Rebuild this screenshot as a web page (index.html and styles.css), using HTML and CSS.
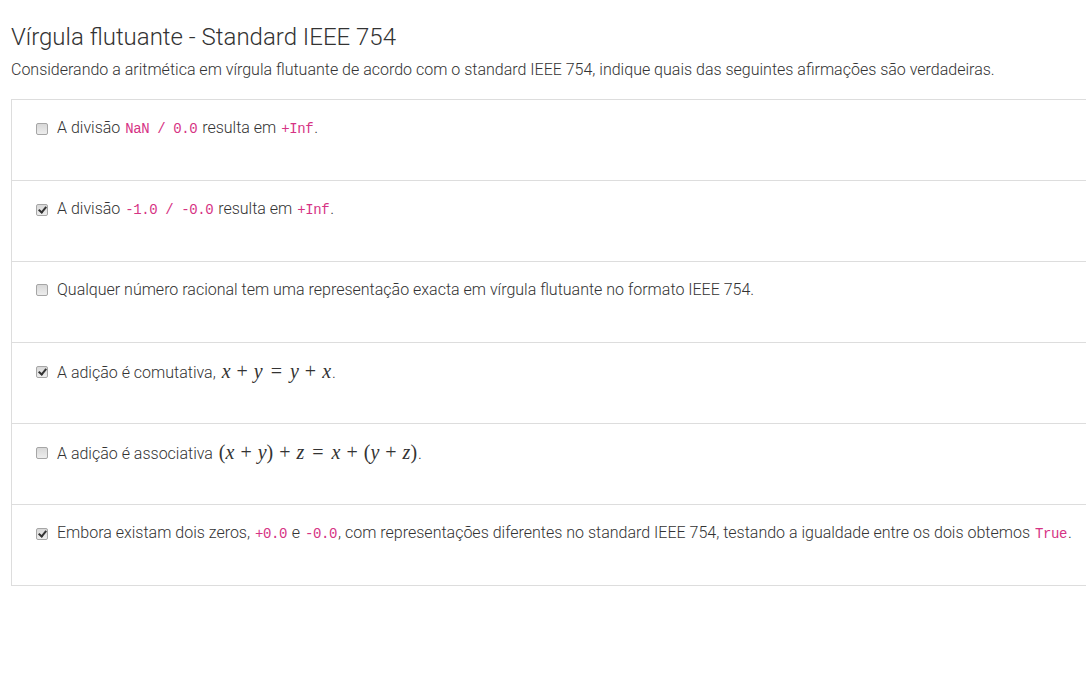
FILE: index.html
```html
<!DOCTYPE html>
<html lang="pt">
<head>
<meta charset="utf-8">
<link rel="stylesheet" href="styles.css">
</head>
<body>
<div class="page">
  <h1 class="title">Vírgula flutuante - Standard IEEE 754</h1>
  <p class="lead">Considerando a aritmética em vírgula flutuante de acordo com o standard IEEE 754, indique quais das seguintes afirmações são verdadeiras.</p>
  <ul class="list">
    <li class="item"><label class="opt"><input type="checkbox" class="cb"><span>A divisão <code>NaN / 0.0</code> resulta em <code>+Inf</code>.</span></label></li>
    <li class="item"><label class="opt"><input type="checkbox" class="cb" checked><span>A divisão <code>-1.0 / -0.0</code> resulta em <code>+Inf</code>.</span></label></li>
    <li class="item"><label class="opt"><input type="checkbox" class="cb"><span>Qualquer número racional tem uma representação exacta em vírgula flutuante no formato IEEE 754.</span></label></li>
    <li class="item"><label class="opt"><input type="checkbox" class="cb" checked><span>A adição é comutativa, <span class="math"><i>x</i><span class="bin">+</span><i>y</i><span class="rel">=</span><i>y</i><span class="bin">+</span><i>x</i></span>.</span></label></li>
    <li class="item"><label class="opt"><input type="checkbox" class="cb"><span>A adição é associativa <span class="math">(<i>x</i><span class="bin">+</span><i>y</i>)<span class="bin">+</span><i>z</i><span class="rel">=</span><i>x</i><span class="bin">+</span>(<i>y</i><span class="bin">+</span><i>z</i>)</span>.</span></label></li>
    <li class="item"><label class="opt"><input type="checkbox" class="cb" checked><span>Embora existam dois zeros, <code>+0.0</code> e <code>-0.0</code>, com representações diferentes no standard IEEE 754, testando a igualdade entre os dois obtemos <code>True</code>.</span></label></li>
  </ul>
</div>
</body>
</html>
```
FILE: styles.css
```css
html, body {
  margin: 0;
  padding: 0;
  background: #fff;
}
body {
  font-family: Roboto, "Liberation Sans", sans-serif;
  font-weight: 300;
  color: #333;
  font-size: 16px;
  overflow: hidden;
}
.page {
  padding: 0 0 0 11px;
  width: 1200px;
}
.title {
  font-size: 24px;
  font-weight: 300;
  margin: 0;
  padding-top: 22px;
  line-height: 30px;
  color: #333;
}
.lead {
  margin: 0;
  padding-top: 7px;
  line-height: 22px;
  color: #333;
}
.list {
  list-style: none;
  margin: 18px 0 0 0;
  padding: 0;
  border: 1px solid #ddd;
  border-right: none;
}
.item {
  height: 80px;
  border-top: 1px solid #ddd;
}
.item:first-child {
  border-top: none;
}
.opt {
  display: flex;
  align-items: center;
  padding: 17px 0 0 24px;
  line-height: 22px;
  white-space: nowrap;
}
.cb {
  appearance: none;
  -webkit-appearance: none;
  width: 12px;
  height: 12px;
  margin: 0 9px 0 0;
  border: 1px solid #a6a6a6;
  border-radius: 2px;
  background: linear-gradient(#d8d8d8, #ededed);
  box-sizing: border-box;
  position: relative;
  flex: none;
}
.cb:checked::after {
  content: "";
  position: absolute;
  left: 3px;
  top: 0px;
  width: 3px;
  height: 6px;
  border: solid #333;
  border-width: 0 2px 2px 0;
  transform: rotate(40deg);
}
code {
  font-family: "Liberation Mono", monospace;
  font-size: 14px;
  letter-spacing: -0.4px;
  color: #d63384;
  padding: 0 1px;
}
.math {
  font-family: "Liberation Serif", serif;
  font-size: 20px;
  padding: 0 1px 0 2px;
}
.math i {
  font-style: italic;
}
.bin {
  margin: 0 6px;
}
.rel {
  margin: 0 8px;
}
```
